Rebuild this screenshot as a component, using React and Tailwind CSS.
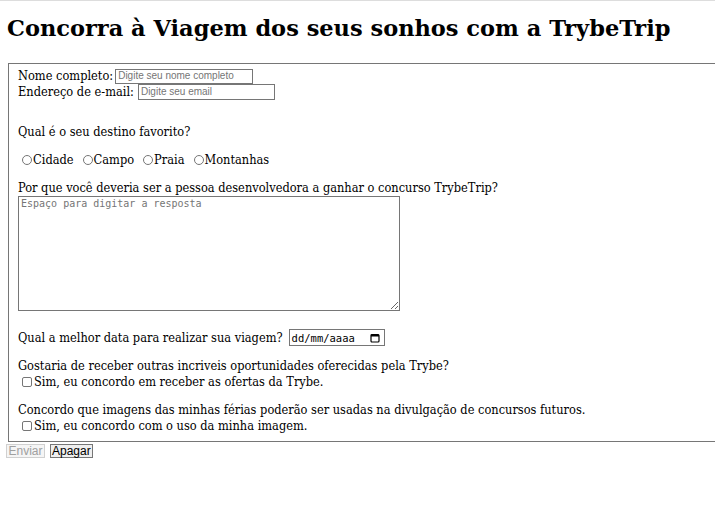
export default function App() {
  const serif = { fontFamily: '"DejaVu Serif Condensed", "DejaVu Serif", serif' };
  return (
    <div className="min-h-screen bg-white text-black" style={serif}>
      <div className="border-t border-[#dddddd]" />
      <h1 className="ml-[7px] mt-[12px] font-['DejaVu_Serif',serif] text-[22.5px] leading-[30px] font-bold">
        Concorra à Viagem dos seus sonhos com a TrybeTrip
      </h1>
      <form className="mt-[20px]">
        <fieldset className="ml-[8px] w-[720px] border border-[#767676] pl-[9px] pt-[4px] pb-[7px] text-[12.7px] leading-[16px]">
          <div className="flex items-center">
            <label>Nome completo:</label>
            <input
              className="ml-[2px] h-[15px] w-[138px] border border-[#767676] px-[2px] text-[10px] font-['Liberation_Sans',sans-serif] placeholder:text-[#757575]"
              placeholder="Digite seu nome completo"
            />
          </div>
          <div className="flex items-center">
            <label>Endereço de e-mail:</label>
            <input
              className="ml-[4px] h-[16px] w-[137px] border border-[#767676] px-[2px] text-[10px] font-['Liberation_Sans',sans-serif] placeholder:text-[#757575]"
              placeholder="Digite seu email"
            />
          </div>
          <p className="mt-[24px]">Qual é o seu destino favorito?</p>
          <div className="mt-[12px] flex items-center gap-[5px]">
            {["Cidade", "Campo", "Praia", "Montanhas"].map((d) => (
              <label key={d} className="flex items-center">
                <span className="ml-[4px] mr-[1px] inline-block h-[10px] w-[10px] rounded-full border border-[#767676]" />
                {d}
              </label>
            ))}
          </div>
          <p className="mt-[12px]">
            Por que você deveria ser a pessoa desenvolvedora a ganhar o concurso TrybeTrip?
          </p>
          <textarea
            className="block h-[115px] w-[382px] resize border border-[#767676] px-[2px] text-[10px] leading-[13px] font-['DejaVu_Sans_Mono',monospace] placeholder:text-[#757575]"
            placeholder="Espaço para digitar a resposta"
          />
          <div className="mt-[18px] flex items-center">
            <span>Qual a melhor data para realizar sua viagem?</span>
            <span className="ml-[6px] flex h-[17px] w-[96px] items-center justify-between border border-[#767676] px-[2px] text-[10.5px] font-['DejaVu_Sans_Mono',monospace]">
              <span>dd/mm/aaaa</span>
              <svg width="10" height="10" viewBox="0 0 10 10" className="mr-[2px]">
                <rect x="1" y="1.5" width="8" height="7.5" rx="1" fill="none" stroke="#000" strokeWidth="1.2" />
                <rect x="1" y="1.5" width="8" height="2" fill="#000" />
              </svg>
            </span>
          </div>
          <p className="mt-[12px]">Gostaria de receber outras incriveis oportunidades oferecidas pela Trybe?</p>
          <label className="flex items-center">
            <span className="ml-[4px] mr-[2px] inline-block h-[10px] w-[10px] rounded-[2px] border border-[#767676]" />
            Sim, eu concordo em receber as ofertas da Trybe.
          </label>
          <p className="mt-[12px]">
            Concordo que imagens das minhas férias poderão ser usadas na divulgação de concursos futuros.
          </p>
          <label className="flex items-center">
            <span className="ml-[4px] mr-[2px] inline-block h-[10px] w-[10px] rounded-[2px] border border-[#767676]" />
            Sim, eu concordo com o uso da minha imagem.
          </label>
        </fieldset>
        <div className="ml-[6px] mt-[2px] flex gap-[5px] font-['Liberation_Sans',sans-serif] text-[12px]">
          <button
            type="button"
            disabled
            className="h-[14px] border border-[#d0d0d0] bg-[#f5f5f5] px-[1.5px] leading-[12px] text-[#a0a0a0]"
          >
            Enviar
          </button>
          <button
            type="button"
            className="h-[14px] border border-[#767676] bg-[#efefef] px-[1px] leading-[12px] text-black"
          >
            Apagar
          </button>
        </div>
      </form>
    </div>
  );
}
